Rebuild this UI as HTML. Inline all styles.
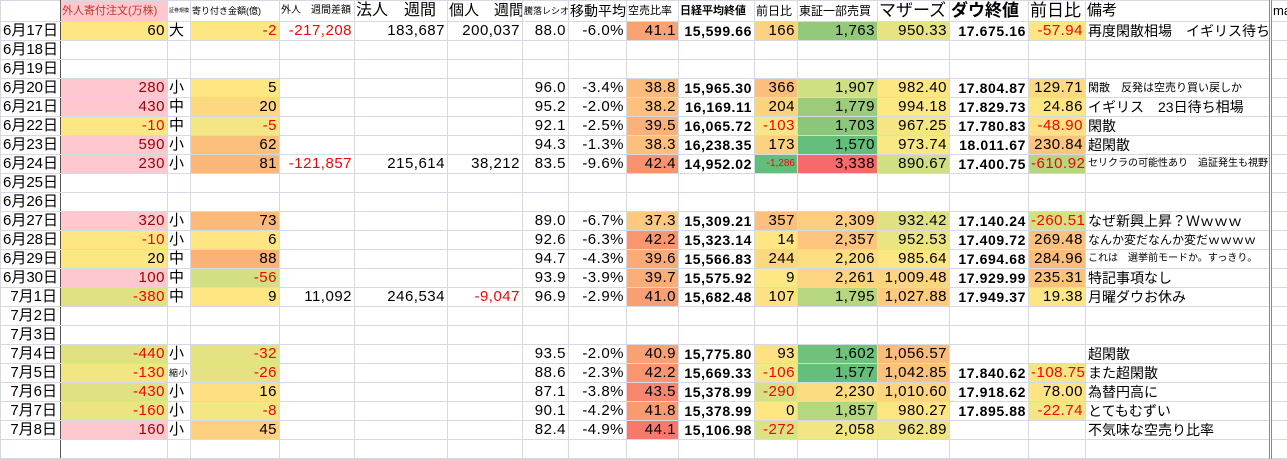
<!DOCTYPE html>
<html><head><meta charset="utf-8"><style>
body{margin:0;background:#fff;width:1287px;height:449px;overflow:hidden}
table{width:1287px;border-collapse:collapse;table-layout:fixed;font-family:"Liberation Sans","Noto Sans CJK JP",sans-serif;font-size:15px;color:#000}
td{border:1px solid #d4d9e3;height:18px;padding:0 2px;white-space:nowrap;overflow:hidden;text-align:right;line-height:18px;letter-spacing:0.5px}
tr.h td{height:20px;text-align:left;padding:0 1px;letter-spacing:0}
td.d{border-right:1px solid #555;text-align:right;padding-right:3px;font-size:15px;letter-spacing:0}
td.s{text-align:left;padding:0 1px}
td.b{font-weight:bold;font-size:14px;letter-spacing:0.6px}
td.n{text-align:left;padding-left:2px;letter-spacing:0;font-size:14px}
.r{color:#f00}.dr{color:#9c0006}
td.sm{font-size:11px}
td.dbl{border-left:3px double #888}
</style></head><body>
<table>
<colgroup><col style="width:60px"><col style="width:107px"><col style="width:23px"><col style="width:89px"><col style="width:75px"><col style="width:93px"><col style="width:75px"><col style="width:46px"><col style="width:58px"><col style="width:52px"><col style="width:76px"><col style="width:43px"><col style="width:80px"><col style="width:72px"><col style="width:79px"><col style="width:57px"><col style="width:185px"><col style="width:17px"></colgroup>
<tr class="h"><td class="d"></td><td style="background:#ffc7ce;color:#c0392b;font-size:11px">外人寄付注文(万株)</td><td style="font-size:5px">証券規模</td><td style="font-size:9px">寄り付き金額(億)</td><td style="font-size:10px">外人　週間差額</td><td style="font-size:16px">法人　週間</td><td style="font-size:15px">個人　週間</td><td style="font-size:9px">騰落レシオ</td><td style="font-size:14px">移動平均</td><td style="font-size:11px">空売比率</td><td style="font-size:11px;font-weight:bold">日経平均終値</td><td style="font-size:12px">前日比</td><td style="font-size:12px">東証一部売買</td><td style="font-size:17px">マザーズ</td><td style="font-size:17px;font-weight:bold">ダウ終値</td><td style="font-size:17px">前日比</td><td style="font-size:15px">備考</td><td class="dbl" style="font-size:13px">ma</td></tr>

<tr><td class="d">6月17日</td><td style="background:#fee783">60</td><td class="s">大</td><td style="background:#fee783" class="r">-2</td><td class="r">-217,208</td><td>183,687</td><td>200,037</td><td>88.0</td><td>-6.0%</td><td style="background:#f9a374">41.1</td><td class="b">15,599.66</td><td style="background:#fdd17f">166</td><td style="background:#93c97a">1,763</td><td style="background:#e8e382">950.33</td><td class="b">17.675.16</td><td style="background:#fee783" class="r">-57.94</td><td class="n">再度閑散相場　イギリス待ち</td><td class="dbl"></td></tr>
<tr><td class="d">6月18日</td><td></td><td></td><td></td><td></td><td></td><td></td><td></td><td></td><td></td><td></td><td></td><td></td><td></td><td></td><td></td><td></td><td class="dbl"></td></tr>
<tr><td class="d">6月19日</td><td></td><td></td><td></td><td></td><td></td><td></td><td></td><td></td><td></td><td></td><td></td><td></td><td></td><td></td><td></td><td></td><td class="dbl"></td></tr>
<tr><td class="d">6月20日</td><td style="background:#ffc7ce" class="dr">280</td><td class="s">小</td><td style="background:#fee783">5</td><td></td><td></td><td></td><td>96.0</td><td>-3.4%</td><td style="background:#fbbb7b">38.8</td><td class="b">15,965.30</td><td style="background:#fcbf7b">366</td><td style="background:#cfe082">1,907</td><td style="background:#fee783">982.40</td><td class="b">17.804.87</td><td style="background:#fdd981">129.71</td><td class="n sm">閑散　反発は空売り買い戻しか</td><td class="dbl"></td></tr>
<tr><td class="d">6月21日</td><td style="background:#ffc7ce" class="dr">430</td><td class="s">中</td><td style="background:#fed880">20</td><td></td><td></td><td></td><td>95.2</td><td>-2.0%</td><td style="background:#fcc17c">38.2</td><td class="b">16,169.11</td><td style="background:#fdd37f">204</td><td style="background:#9bcb7b">1,779</td><td style="background:#fee884">994.18</td><td class="b">17.829.73</td><td style="background:#fee783">24.86</td><td class="n">イギリス　23日待ち相場</td><td class="dbl"></td></tr>
<tr><td class="d">6月22日</td><td style="background:#fee783" class="r">-10</td><td class="s">中</td><td style="background:#f4e683" class="r">-5</td><td></td><td></td><td></td><td>92.1</td><td>-2.5%</td><td style="background:#fab27a">39.5</td><td class="b">16,065.72</td><td style="background:#f6e684" class="r">-103</td><td style="background:#8bc67a">1,703</td><td style="background:#f3e683">967.25</td><td class="b">17.780.83</td><td style="background:#fee182" class="r">-48.90</td><td class="n">閑散</td><td class="dbl"></td></tr>
<tr><td class="d">6月23日</td><td style="background:#ffc7ce" class="dr">590</td><td class="s">小</td><td style="background:#fcc07c">62</td><td></td><td></td><td></td><td>94.3</td><td>-1.3%</td><td style="background:#fcc07c">38.3</td><td class="b">16,238.35</td><td style="background:#fdd17f">173</td><td style="background:#63be7b">1,570</td><td style="background:#f8e883">973.74</td><td class="b">18.011.67</td><td style="background:#fcc57d">230.84</td><td class="n">超閑散</td><td class="dbl"></td></tr>
<tr><td class="d">6月24日</td><td style="background:#ffc7ce" class="dr">230</td><td class="s">小</td><td style="background:#fbb67a">81</td><td class="r">-121,857</td><td>215,614</td><td>38,212</td><td>83.5</td><td>-9.6%</td><td style="background:#f9936f">42.4</td><td class="b">14,952.02</td><td style="background:#63be7b;font-size:10px;letter-spacing:0" class="r">-1,286</td><td style="background:#f8696b">3,338</td><td style="background:#cfdf82">890.67</td><td class="b">17.400.75</td><td style="background:#b5d67f" class="r">-610.92</td><td class="n" style="font-size:10px">セリクラの可能性あり　追証発生も視野</td><td class="dbl"></td></tr>
<tr><td class="d">6月25日</td><td></td><td></td><td></td><td></td><td></td><td></td><td></td><td></td><td></td><td></td><td></td><td></td><td></td><td></td><td></td><td></td><td class="dbl"></td></tr>
<tr><td class="d">6月26日</td><td></td><td></td><td></td><td></td><td></td><td></td><td></td><td></td><td></td><td></td><td></td><td></td><td></td><td></td><td></td><td></td><td class="dbl"></td></tr>
<tr><td class="d">6月27日</td><td style="background:#ffc7ce" class="dr">320</td><td class="s">小</td><td style="background:#fbb97a">73</td><td></td><td></td><td></td><td>89.0</td><td>-6.7%</td><td style="background:#fdc97e">37.3</td><td class="b">15,309.21</td><td style="background:#fcc07c">357</td><td style="background:#fdcd7e">2,309</td><td style="background:#dfe182">932.42</td><td class="b">17.140.24</td><td style="background:#d6e081" class="r">-260.51</td><td class="n">なぜ新興上昇？Ｗｗｗｗ</td><td class="dbl"></td></tr>
<tr><td class="d">6月28日</td><td style="background:#fee783" class="r">-10</td><td class="s">小</td><td style="background:#fee783">6</td><td></td><td></td><td></td><td>92.6</td><td>-6.3%</td><td style="background:#f99670">42.2</td><td class="b">15,323.14</td><td style="background:#fee783">14</td><td style="background:#fcc47c">2,357</td><td style="background:#ebe483">952.53</td><td class="b">17.409.72</td><td style="background:#fcc17c">269.48</td><td class="n" style="font-size:12px">なんか変だなんか変だｗｗｗｗ</td><td class="dbl"></td></tr>
<tr><td class="d">6月29日</td><td style="background:#fee783">20</td><td class="s">中</td><td style="background:#fbb279">88</td><td></td><td></td><td></td><td>94.7</td><td>-4.3%</td><td style="background:#fbab78">39.6</td><td class="b">15,566.83</td><td style="background:#fdd880">244</td><td style="background:#fddf82">2,206</td><td style="background:#fee783">985.64</td><td class="b">17.694.68</td><td style="background:#fcbd7b">284.96</td><td class="n" style="font-size:10px">これは　選挙前モードか。すっきり。</td><td class="dbl"></td></tr>
<tr><td class="d">6月30日</td><td style="background:#ffc7ce" class="dr">100</td><td class="s">中</td><td style="background:#d3df82" class="r">-56</td><td></td><td></td><td></td><td>93.9</td><td>-3.9%</td><td style="background:#fbad78">39.7</td><td class="b">15,575.92</td><td style="background:#fee883">9</td><td style="background:#fdd580">2,261</td><td style="background:#fdd47f">1,009.48</td><td class="b">17.929.99</td><td style="background:#fcc37c">235.31</td><td class="n">特記事項なし</td><td class="dbl"></td></tr>
<tr><td class="d">7月1日</td><td style="background:#e0e183" class="r">-380</td><td class="s">中</td><td style="background:#fee783">9</td><td>11,092</td><td>246,534</td><td class="r">-9,047</td><td>96.9</td><td>-2.9%</td><td style="background:#fa9f73">41.0</td><td class="b">15,682.48</td><td style="background:#fee182">107</td><td style="background:#b6d77f">1,795</td><td style="background:#fdca7e">1,027.88</td><td class="b">17.949.37</td><td style="background:#fee783">19.38</td><td class="n">月曜ダウお休み</td><td class="dbl"></td></tr>
<tr><td class="d">7月2日</td><td></td><td></td><td></td><td></td><td></td><td></td><td></td><td></td><td></td><td></td><td></td><td></td><td></td><td></td><td></td><td></td><td class="dbl"></td></tr>
<tr><td class="d">7月3日</td><td></td><td></td><td></td><td></td><td></td><td></td><td></td><td></td><td></td><td></td><td></td><td></td><td></td><td></td><td></td><td></td><td class="dbl"></td></tr>
<tr><td class="d">7月4日</td><td style="background:#e0e183" class="r">-440</td><td class="s">小</td><td style="background:#e5e283" class="r">-32</td><td></td><td></td><td></td><td>93.5</td><td>-2.0%</td><td style="background:#faa174">40.9</td><td class="b">15,775.80</td><td style="background:#fee182">93</td><td style="background:#6fc27c">1,602</td><td style="background:#fbbc7b">1,056.57</td><td></td><td></td><td class="n">超閑散</td><td class="dbl"></td></tr>
<tr><td class="d">7月5日</td><td style="background:#f2e683" class="r">-130</td><td class="s" style="font-size:9px">縮小</td><td style="background:#e5e283" class="r">-26</td><td></td><td></td><td></td><td>88.6</td><td>-2.3%</td><td style="background:#f99670">42.2</td><td class="b">15,669.33</td><td style="background:#f3e683" class="r">-106</td><td style="background:#65bf7b">1,577</td><td style="background:#fcc27c">1,042.85</td><td class="b">17.840.62</td><td style="background:#f3e683" class="r">-108.75</td><td class="n">また超閑散</td><td class="dbl"></td></tr>
<tr><td class="d">7月6日</td><td style="background:#e0e183" class="r">-430</td><td class="s">小</td><td style="background:#fee082">16</td><td></td><td></td><td></td><td>87.1</td><td>-3.8%</td><td style="background:#f8856d">43.5</td><td class="b">15,378.99</td><td style="background:#d7e082" class="r">-290</td><td style="background:#fddb81">2,230</td><td style="background:#fdd47f">1,010.60</td><td class="b">17.918.62</td><td style="background:#fee483">78.00</td><td class="n">為替円高に</td><td class="dbl"></td></tr>
<tr><td class="d">7月7日</td><td style="background:#ece483" class="r">-160</td><td class="s">小</td><td style="background:#f4e683" class="r">-8</td><td></td><td></td><td></td><td>90.1</td><td>-4.2%</td><td style="background:#f99b71">41.8</td><td class="b">15,378.99</td><td style="background:#fee783">0</td><td style="background:#b5d77f">1,857</td><td style="background:#fee583">980.27</td><td class="b">17.895.88</td><td style="background:#f3e683" class="r">-22.74</td><td class="n">とてもむずい</td><td class="dbl"></td></tr>
<tr><td class="d">7月8日</td><td style="background:#ffc7ce" class="dr">160</td><td class="s">小</td><td style="background:#fed17f">45</td><td></td><td></td><td></td><td>82.4</td><td>-4.9%</td><td style="background:#f8786c">44.1</td><td class="b">15,106.98</td><td style="background:#dce182" class="r">-272</td><td style="background:#f2e683">2,058</td><td style="background:#f1e583">962.89</td><td></td><td></td><td class="n">不気味な空売り比率</td><td class="dbl"></td></tr>
<tr><td class="d"></td><td></td><td></td><td></td><td></td><td></td><td></td><td></td><td></td><td></td><td></td><td></td><td></td><td></td><td></td><td></td><td></td><td class="dbl"></td></tr>
</table>
</body></html>
